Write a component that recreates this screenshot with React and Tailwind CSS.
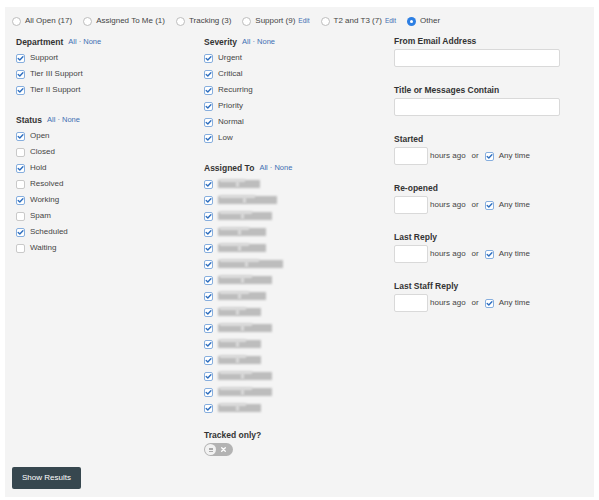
import React from "react";

const FONT = { fontFamily: '"Liberation Sans", Arial, Helvetica, sans-serif' };

function Check({ checked }) {
  if (!checked) {
    return <span className="inline-block w-[9px] h-[9px] shrink-0 rounded-[2px] border border-[#c9c9c9] bg-white" />;
  }
  return (
    <svg width="9" height="9" viewBox="0 0 9 9" className="shrink-0">
      <rect x="0.5" y="0.5" width="8" height="8" rx="1.5" fill="#fff" stroke="#86aede" />
      <path d="M2.2 4.6 L3.8 6.1 L6.9 2.8" fill="none" stroke="#2f6fbf" strokeWidth="1.4" strokeLinecap="round" strokeLinejoin="round" />
    </svg>
  );
}

function Radio({ checked }) {
  if (checked) {
    return (
      <span className="inline-flex items-center justify-center w-[9px] h-[9px] rounded-full bg-[#2d7fe3] shrink-0">
        <span className="w-[3px] h-[3px] rounded-full bg-white" />
      </span>
    );
  }
  return <span className="inline-block w-[9px] h-[9px] rounded-full border border-[#bdbdbd] bg-white shrink-0" />;
}

function Heading({ title, links = true, className = "" }) {
  return (
    <div className={"h-4 flex items-center gap-[5px] " + className}>
      <span className="text-[8.5px] font-bold text-[#333]">{title}</span>
      {links && (
        <span className="text-[7.5px] text-[#3d6fb3]">All · None</span>
      )}
    </div>
  );
}

function Item({ label, checked = true }) {
  return (
    <div className="h-4 flex items-center gap-[5px]">
      <Check checked={checked} />
      <span className="text-[8px] text-[#444]">{label}</span>
    </div>
  );
}

function Blurred({ w }) {
  return (
    <div className="h-4 flex items-center gap-[5px]">
      <Check checked />
      <div className="relative h-[10px]" style={{ width: w }}>
        <div className="absolute left-0 top-[1px] h-[8px] w-full bg-[#bdbdbd] blur-[1px]" />
        <div className="absolute left-[2px] top-[0px] h-[3px] w-[60%] bg-[#dcdcdc] blur-[1px]" />
        <div className="absolute left-[42%] top-[2px] h-[6px] w-[3px] bg-[#dadada] blur-[1px]" />
      </div>
    </div>
  );
}

function TextField({ label }) {
  return (
    <div>
      <div className="h-[15px] leading-[15px] text-[8.5px] font-bold text-[#333]">{label}</div>
      <div className="w-[166px] h-[18px] bg-white border border-[#d9d9d9] rounded-[2px]" />
    </div>
  );
}

function TimeField({ label }) {
  return (
    <div>
      <div className="h-[15px] leading-[15px] text-[8.5px] font-bold text-[#333]">{label}</div>
      <div className="flex items-center h-[18px]">
        <div className="w-[34px] h-[18px] bg-white border border-[#d9d9d9] rounded-[2px]" />
        <span className="ml-[2px] text-[8px] text-[#444]">hours ago</span>
        <span className="ml-[6px] text-[8px] text-[#444]">or</span>
        <span className="ml-[6px] flex items-center"><Check checked /></span>
        <span className="ml-[5px] text-[8px] text-[#444]">Any time</span>
      </div>
    </div>
  );
}

const radios = [
  { label: "All Open (17)" },
  { label: "Assigned To Me (1)" },
  { label: "Tracking (3)" },
  { label: "Support (9)", edit: true },
  { label: "T2 and T3 (7)", edit: true },
  { label: "Other", checked: true },
];

const names = [42, 59, 54, 48, 48, 65, 54, 48, 43, 54, 43, 43, 54, 54, 43];

export default function App() {
  return (
    <div className="w-[599px] h-[500px] bg-white pt-[7px] pl-[5px]" style={FONT}>
      <div className="w-[589px] h-[490px] bg-[#f4f4f4] pl-[7px] pt-[1px]">
        <div className="h-[26px] flex items-center">
          {radios.map((r, i) => (
            <div key={i} className="flex items-center mr-[11px]">
              <Radio checked={r.checked} />
              <span className="ml-[4px] text-[8px] text-[#444]">{r.label}</span>
              {r.edit && <span className="ml-[3px] text-[6.5px] text-[#3d6fb3]">Edit</span>}
            </div>
          ))}
        </div>
        <div className="flex pl-[4px]">
          <div className="w-[188px]">
            <Heading title="Department" />
            <Item label="Support" />
            <Item label="Tier III Support" />
            <Item label="Tier II Support" />
            <Heading title="Status" className="mt-[14px]" />
            <Item label="Open" />
            <Item label="Closed" checked={false} />
            <Item label="Hold" />
            <Item label="Resolved" checked={false} />
            <Item label="Working" />
            <Item label="Spam" checked={false} />
            <Item label="Scheduled" />
            <Item label="Waiting" checked={false} />
          </div>
          <div className="w-[190px]">
            <Heading title="Severity" />
            <Item label="Urgent" />
            <Item label="Critical" />
            <Item label="Recurring" />
            <Item label="Priority" />
            <Item label="Normal" />
            <Item label="Low" />
            <Heading title="Assigned To" className="mt-[14px]" />
            {names.map((w, i) => (
              <Blurred key={i} w={w} />
            ))}
            <div className="mt-[11px] h-4 flex items-center text-[8.5px] font-bold text-[#333]">Tracked only?</div>
            <div className="relative w-[29px] h-[13px] rounded-full bg-[#b3b3b3]">
              <div className="absolute left-[1px] top-[1px] w-[11px] h-[11px] rounded-full bg-[#f2f2f2] flex flex-col items-center justify-center gap-[1px]">
                <span className="block w-[4px] h-[0.5px] bg-[#aaa]" />
                <span className="block w-[4px] h-[0.5px] bg-[#aaa]" />
                <span className="block w-[4px] h-[0.5px] bg-[#aaa]" />
              </div>
              <svg className="absolute left-[17px] top-[4px]" width="5" height="5" viewBox="0 0 5 5">
                <path d="M0.7 0.7 L4.3 4.3 M4.3 0.7 L0.7 4.3" stroke="#fff" strokeWidth="1.3" strokeLinecap="round" />
              </svg>
            </div>
          </div>
          <div className="flex flex-col gap-[16px]">
            <TextField label="From Email Address" />
            <TextField label="Title or Messages Contain" />
            <TimeField label="Started" />
            <TimeField label="Re-opened" />
            <TimeField label="Last Reply" />
            <TimeField label="Last Staff Reply" />
          </div>
        </div>
        <button className="mt-[11px] w-[69px] h-[22px] bg-[#37474f] rounded-[2px] text-white text-[8px] flex items-center justify-center">
          Show Results
        </button>
      </div>
    </div>
  );
}
